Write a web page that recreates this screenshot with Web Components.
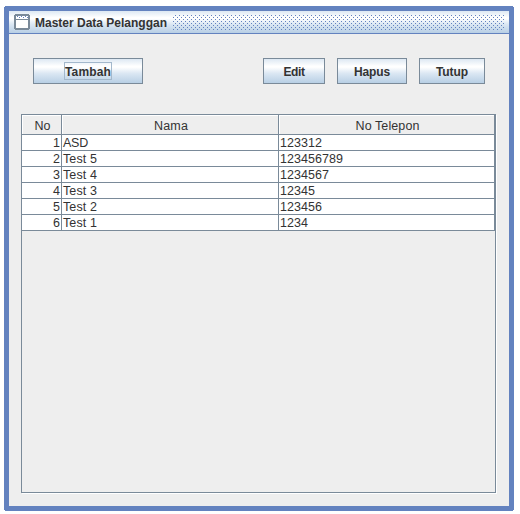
<!DOCTYPE html>
<html lang="id"><head><meta charset="utf-8"><title>Master Data Pelanggan</title>
<style>
html,body{margin:0;background:#fff}
body{width:520px;height:514px;overflow:hidden;padding:6px 0 0 4px;box-sizing:border-box;font:12.5px/16px "Liberation Sans",Arial,sans-serif;color:#333}
</style></head><body>
<internal-frame heading="Master Data Pelanggan">
  <tool-row>
    <metal-button w="110" tw="46" focused>Tambah</metal-button>
    <metal-button slot="end" w="62" tw="21">Edit</metal-button>
    <metal-button slot="end" w="70" tw="36">Hapus</metal-button>
    <metal-button slot="end" w="66" tw="32">Tutup</metal-button>
  </tool-row>
  <data-table></data-table>
</internal-frame>
<script>
// Text spread over a fixed advance width.
customElements.define('fit-text', class extends HTMLElement{
  connectedCallback(){
    const r=this.attachShadow({mode:'open'});
    r.innerHTML='<style>:host{display:inline-block;white-space:pre}span{display:inline-block}</style><span></span>';
    const s=r.querySelector('span'),t=this.getAttribute('text'),w=+this.getAttribute('w');
    s.textContent=t;
    const n=s.getBoundingClientRect().width;
    s.style.letterSpacing=((w-n)/t.length)+'px';
  }
});
customElements.define('metal-button', class extends HTMLElement{
  connectedCallback(){
    const t=this.textContent;
    const r=this.attachShadow({mode:'open'});
    r.innerHTML=`<style>
    :host{display:flex;box-sizing:border-box;width:${this.getAttribute('w')}px;height:26px;border:1px solid #7a8a99;align-items:center;justify-content:center;font-weight:bold;font-size:12px;
      background:linear-gradient(#dde8f3 0,#fff 30%,#fff 34%,#dbe7f3 60%,#b8cfe5 100%)}
    div{display:flex;height:16px;line-height:18px;border:1px solid transparent}
    :host([focused]) div{border-color:#a3b8cc}
    </style><div><fit-text text="${t}" w="${this.getAttribute('tw')}"></fit-text></div>`;
  }
});
customElements.define('tool-row', class extends HTMLElement{
  constructor(){super();this.attachShadow({mode:'open'}).innerHTML=`<style>
  :host{display:flex;justify-content:space-between;padding:24px 24px 30px}
  div{display:flex;gap:12px}</style><slot></slot><div><slot name="end"></slot></div>`}
});
customElements.define('internal-frame', class extends HTMLElement{
  constructor(){super();this.attachShadow({mode:'open'}).innerHTML=`<style>
  :host{display:block;box-sizing:border-box;width:510px;height:505px;border:5px solid #6382bf;background:#eee;
    clip-path:polygon(1px 0,509px 0,509px 1px,510px 1px,510px 504px,509px 504px,509px 505px,1px 505px,1px 504px,0 504px,0 1px,1px 1px)}
  header{display:flex;height:22px;border-bottom:1px solid #6382bf;padding:0 5px;
    background:linear-gradient(#dde8f3 0,#fff 30%,#fff 34%,#dbe7f3 60%,#b8cfe5 100%)}
  svg{display:block}
  .icon{margin-top:3px}
  fit-text{font-weight:bold;font-size:12px;line-height:24px;margin-left:5px;width:138px}
  </style><header>
  <svg class="icon" width="16" height="16" shape-rendering="crispEdges">
    <path d="M1 0h14v1h1v14h-1v1H1v-1H0V1h1z" fill="#7a8a99"/><path d="M2 2h12v3H2zM2 6h12v8H2z" fill="#fff"/>
    <path d="M3 2h1v1H3zM7 2h1v1H7zM11 2h1v1h-1zM5 3h1v1H5zM9 3h1v1H9zM13 3h1v1h-1z" fill="#6382bf"/></svg>
  <fit-text w="132" text="${this.getAttribute('heading')||'Master Data Pelanggan'}"></fit-text>
  <svg width="331" height="22" shape-rendering="crispEdges"><defs><pattern id="b" x="0" y="4" width="4" height="4" patternUnits="userSpaceOnUse"><path d="M2 0h1v1H2zM0 2h1v1H0z" fill="#6382bf"/></pattern></defs><rect y="4" width="331" height="15" fill="url(#b)"/></svg>
  </header><slot></slot>`}
});
customElements.define('data-table', class extends HTMLElement{
  connectedCallback(){
    const rows=[['1','ASD','123312',25],['2','Test 5','123456789',34],['3','Test 4','1234567',34],['4','Test 3','12345',34],['5','Test 2','123456',34],['6','Test 1','1234',34]];
    const f=(t,w)=>`<fit-text text="${t}" w="${w}"></fit-text>`;
    this.attachShadow({mode:'open'}).innerHTML=`<style>
    :host{display:block;box-sizing:border-box;width:475px;height:379px;margin-left:12px;border:1px solid #7a8a99;box-shadow:1px 1px #fff}
    .row{display:grid;grid-template-columns:40px 217px 216px}
    .row>*{box-sizing:border-box;height:16px;border:solid #7a8a99;border-width:0 1px 1px 0;background:#fff;padding-left:1px;line-height:16px}
    .row>:first-child{text-align:right;padding:0 1px 0 0}
    .head>*,.head>:first-child{height:20px;text-align:center;background:#eee;box-shadow:inset 1px 1px #fff;line-height:22px;padding:0 0 0 2px}
    </style><div class="row head"><div>${f('No',16)}</div><div>${f('Nama',34)}</div><div>${f('No Telepon',64)}</div></div>`+
    rows.map(r=>`<div class="row"><div>${f(r[0],7)}</div><div>${f(r[1],r[3])}</div><div>${f(r[2],r[2].length*7)}</div></div>`).join('');
  }
});
</script></body></html>
